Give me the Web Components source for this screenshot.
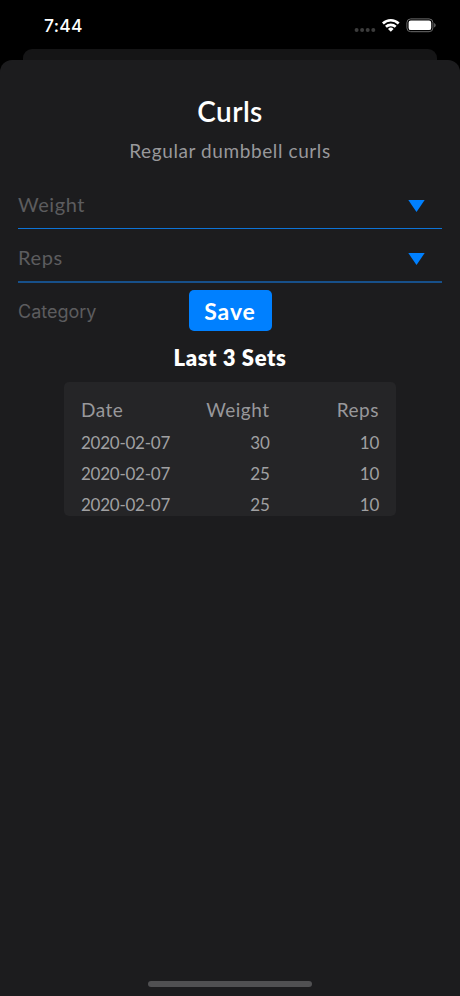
<!DOCTYPE html>
<html lang="en">
<head>
<meta charset="utf-8">
<meta name="viewport" content="width=device-width, initial-scale=1">
<title>Curls</title>
<style>
    body {
        margin: 0;
        background: #000;
        font-family: Lato, "Open Sans", sans-serif;
    }
</style>
</head>
<body>
<phone-screen>
    <status-bar slot="status" time="7:44"></status-bar>
    <exercise-header>
        Curls
        <span slot="description">Regular dumbbell curls</span>
    </exercise-header>
    <picker-field>Weight</picker-field>
    <picker-field>Reps</picker-field>
    <save-row label="Category">Save</save-row>
    <set-history heading="Last 3 Sets">
        <set-row header date="Date" weight="Weight" reps="Reps"></set-row>
        <set-row date="2020-02-07" weight="30" reps="10"></set-row>
        <set-row date="2020-02-07" weight="25" reps="10"></set-row>
        <set-row date="2020-02-07" weight="25" reps="10"></set-row>
    </set-history>
</phone-screen>

<script>
class PhoneScreen extends HTMLElement {
    constructor() {
        super();
        this.attachShadow({ mode: 'open' });
    }

    connectedCallback() {
        this.shadowRoot.innerHTML = `
            <style>
                :host {
                    display: flex;
                    flex-direction: column;
                    height: 996px;
                    overflow: hidden;
                    background: #000;
                }
                .behind {
                    flex: none;
                    height: 11px;
                    margin: 0 23px;
                    border-radius: 9px 9px 0 0;
                    background: #151516;
                }
                .sheet {
                    flex: 1;
                    display: flex;
                    flex-direction: column;
                    box-sizing: border-box;
                    padding: 31px 18px 9px;
                    border-radius: 12px 12px 0 0;
                    background: #1c1c1e;
                }
                .home {
                    width: 164px;
                    height: 6px;
                    margin: auto auto 0;
                    border-radius: 3px;
                    background: #505052;
                }
            </style>
            <slot name="status"></slot>
            <div class="behind"></div>
            <div class="sheet">
                <slot></slot>
                <div class="home"></div>
            </div>
        `;
    }
}

class StatusBar extends HTMLElement {
    constructor() {
        super();
        this.attachShadow({ mode: 'open' });
    }

    connectedCallback() {
        this.shadowRoot.innerHTML = `
            <style>
                :host {
                    display: flex;
                    justify-content: space-between;
                    flex: none;
                    box-sizing: border-box;
                    height: 49px;
                    padding: 15px 24px 0 44px;
                    color: #fff;
                    font: 500 17.5px/22px Inter, sans-serif;
                    letter-spacing: 0.3px;
                }
            </style>
            <span>${this.getAttribute('time')}</span>
            <svg width="82" height="22" viewBox="0 0 82 22">
                <g fill="#3c3c3c">
                    <circle cx="2.6" cy="15" r="2"/>
                    <circle cx="8.1" cy="15" r="2"/>
                    <circle cx="13.7" cy="15" r="2"/>
                    <circle cx="19.3" cy="15" r="2"/>
                </g>
                <g fill="none" stroke="#fff" stroke-width="2.6">
                    <path d="M28.9 8.5a11.4 11.4 0 0 1 15.8 0"/>
                    <path d="M31.9 11.8a7.1 7.1 0 0 1 9.8 0"/>
                </g>
                <path fill="#fff" d="M36.8 16.8l-2.8-2.9a4.1 4.1 0 0 1 5.6 0z"/>
                <rect x="52.9" y="3.9" width="26" height="12.8" rx="3.8" fill="none" stroke="#6c6c6c"/>
                <rect x="54.6" y="5.5" width="22.6" height="9.6" rx="2.2" fill="#fff"/>
                <path fill="#6c6c6c" d="M80.2 8.1c1.9.8 1.9 3.6 0 4.4z"/>
            </svg>
        `;
    }
}

class ExerciseHeader extends HTMLElement {
    constructor() {
        super();
        this.attachShadow({ mode: 'open' });
    }

    connectedCallback() {
        this.shadowRoot.innerHTML = `
            <style>
                :host {
                    display: flex;
                    flex-direction: column;
                    align-items: center;
                    gap: 8px;
                    margin-bottom: 13px;
                }
                .title {
                    color: #fff;
                    font-size: 28px;
                    font-weight: 600;
                    line-height: 40px;
                    letter-spacing: 0.4px;
                }
                .description {
                    color: #98989b;
                    font-size: 19px;
                    line-height: 24px;
                    letter-spacing: 0.6px;
                }
            </style>
            <div class="title"><slot></slot></div>
            <div class="description"><slot name="description"></slot></div>
        `;
    }
}

class PickerField extends HTMLElement {
    constructor() {
        super();
        this.attachShadow({ mode: 'open' });
    }

    connectedCallback() {
        this.shadowRoot.innerHTML = `
            <style>
                :host {
                    display: flex;
                    align-items: center;
                    justify-content: space-between;
                    box-sizing: border-box;
                    height: 53px;
                    padding: 5px 17px 0 0;
                    border-bottom: 1px solid #0d73d6;
                    color: #5c5c5f;
                    font-size: 20px;
                    line-height: 24px;
                    letter-spacing: 0.6px;
                }
                :host(:last-of-type) {
                    height: 54px;
                    border-bottom: 2px solid #17508a;
                }
                span {
                    padding-bottom: 2px;
                }
                svg {
                    padding-top: 2px;
                }
            </style>
            <span><slot></slot></span>
            <svg width="17" height="12" viewBox="0 0 17 12">
                <path fill="#0080ff" d="M.3 0h16.4L8.5 12z"/>
            </svg>
        `;
    }
}

class SaveRow extends HTMLElement {
    constructor() {
        super();
        this.attachShadow({ mode: 'open' });
    }

    connectedCallback() {
        this.shadowRoot.innerHTML = `
            <style>
                :host {
                    display: grid;
                    grid-template-columns: 1fr 83px 1fr;
                    align-items: center;
                    margin: 7px 0 11px;
                }
                .label {
                    padding-top: 3px;
                    color: #5c5c5f;
                    font: 18px/24px Inter, sans-serif;
                }
                button {
                    height: 41px;
                    padding: 0;
                    border: 0;
                    border-radius: 5px;
                    background: #0080ff;
                    color: #fff;
                    font: 700 23px/40px Lato, sans-serif;
                    letter-spacing: 0.9px;
                }
            </style>
            <span class="label">${this.getAttribute('label')}</span>
            <button><slot></slot></button>
        `;
    }
}

class SetHistory extends HTMLElement {
    constructor() {
        super();
        this.attachShadow({ mode: 'open' });
    }

    connectedCallback() {
        this.shadowRoot.innerHTML = `
            <style>
                :host {
                    display: block;
                }
                .heading {
                    height: 30px;
                    color: #fff;
                    font-size: 22px;
                    font-weight: 800;
                    line-height: 31px;
                    letter-spacing: 0.6px;
                    text-align: center;
                }
                .table {
                    box-sizing: border-box;
                    width: 332px;
                    height: 134px;
                    margin: 10px 0 0 46px;
                    padding: 12px 17px 0;
                    overflow: hidden;
                    border-radius: 5px;
                    background: #252527;
                }
            </style>
            <div class="heading">${this.getAttribute('heading')}</div>
            <div class="table"><slot></slot></div>
        `;
    }
}

class SetRow extends HTMLElement {
    constructor() {
        super();
        this.attachShadow({ mode: 'open' });
    }

    connectedCallback() {
        this.shadowRoot.innerHTML = `
            <style>
                :host {
                    display: grid;
                    grid-template-columns: 100px 88.5px 109.5px;
                    height: 31px;
                    color: #a0a0a2;
                    font-size: 17px;
                    line-height: 31px;
                    letter-spacing: -0.25px;
                }
                :host([header]) {
                    height: 33px;
                    color: #98989b;
                    font-size: 19px;
                    letter-spacing: 0.5px;
                }
                .number {
                    text-align: right;
                }
            </style>
            <span>${this.getAttribute('date')}</span>
            <span class="number">${this.getAttribute('weight')}</span>
            <span class="number">${this.getAttribute('reps')}</span>
        `;
    }
}

customElements.define('phone-screen', PhoneScreen);
customElements.define('status-bar', StatusBar);
customElements.define('exercise-header', ExerciseHeader);
customElements.define('picker-field', PickerField);
customElements.define('save-row', SaveRow);
customElements.define('set-history', SetHistory);
customElements.define('set-row', SetRow);
</script>
</body>
</html>
